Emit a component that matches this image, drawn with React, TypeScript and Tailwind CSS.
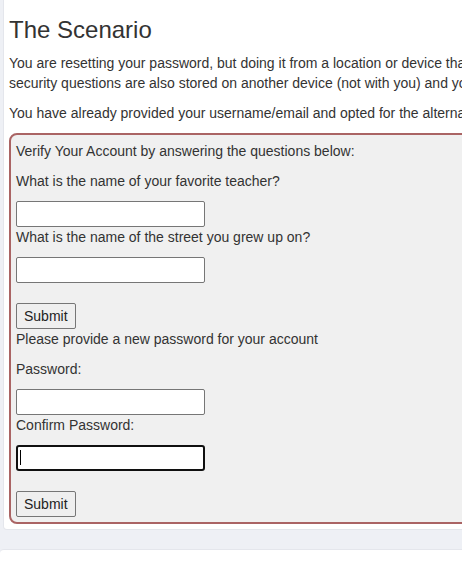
export default function App() {
  return (
    <div className="h-[561px] w-full overflow-hidden bg-[#eef0f5] font-['Liberation_Sans',Arial,sans-serif] text-[14px] leading-[20px] text-[#333]">
      {/* scenario card */}
      <div className="ml-[3px] w-[900px] rounded-b-[4px] border-x border-b border-[#e4e6ec] bg-white px-[5px] pt-[16px] pb-[5px]">
        <h3 className="mb-[10px] text-[24px] leading-[27px] font-normal">The Scenario</h3>
        <p className="mb-[10px]">
          You are resetting your password, but doing it from a location or device that you do not usually use. Your
          <br />
          security questions are also stored on another device (not with you) and you cannot look up your answers there.
        </p>
        <p className="mb-[10px]">
          You have already provided your username/email and opted for the alternative method of answering your security questions.
        </p>

        <div className="mt-[1px] rounded-[8px] border-2 border-[#aa6464] bg-[#f0f0f0] px-[5px] pt-[6px] pb-[5px]">
          <p className="mb-[10px]">Verify Your Account by answering the questions below:</p>
          <p className="mb-[10px]">What is the name of your favorite teacher?</p>
          <input type="text" className="block h-[26px] w-[189px] rounded-[2px] border border-[#767676] bg-white px-[2px] outline-none" />
          <p className="mb-[10px]">What is the name of the street you grew up on?</p>
          <input type="text" className="block h-[26px] w-[189px] rounded-[2px] border border-[#767676] bg-white px-[2px] outline-none" />
          <button className="mt-[20px] block h-[26px] rounded-[2px] border border-[#767676] bg-[#efefef] px-[7px] text-[14px] leading-[20px] text-[#222]">
            Submit
          </button>

          <p className="mb-[10px]">Please provide a new password for your account</p>
          <p className="mb-[10px]">Password:</p>
          <input type="password" className="block h-[26px] w-[189px] rounded-[2px] border border-[#767676] bg-white px-[2px] outline-none" />
          <p className="mb-[10px]">Confirm Password:</p>
          <div className="relative h-[26px] w-[189px]">
            <input type="password" className="block h-[26px] w-[189px] rounded-[3px] border-2 border-[#101010] bg-white px-[2px] outline-none" />
            <span className="absolute top-[5px] left-[4px] h-[15px] w-px bg-black" />
          </div>
          <button className="mt-[20px] block h-[26px] rounded-[2px] border border-[#767676] bg-[#efefef] px-[7px] text-[14px] leading-[20px] text-[#222]">
            Submit
          </button>
        </div>
      </div>

      {/* next card */}
      <div className="mt-[19px] h-[40px] w-[900px] rounded-t-[4px] border-t border-[#e4e6ec] bg-white" />
    </div>
  );
}
